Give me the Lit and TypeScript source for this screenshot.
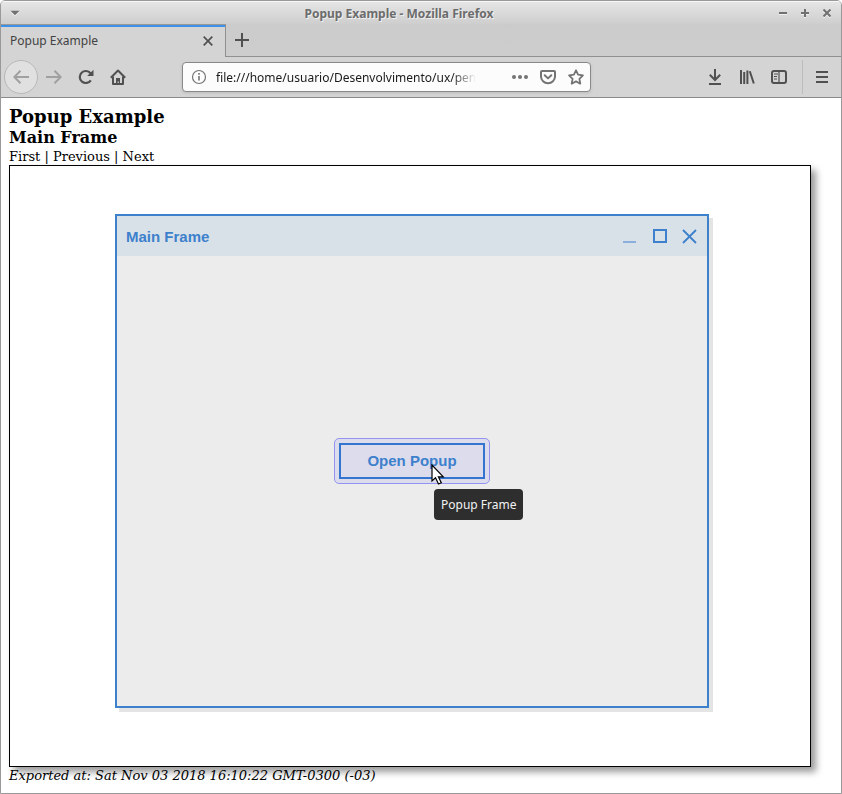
import { LitElement, html, css } from "lit";
import { customElement, property } from "lit/decorators.js";

@customElement("browser-chrome")
class BrowserChrome extends LitElement {
  @property() heading = "";
  @property() url = "";

  static styles = css`
    :host {
      display: block;
      font: 12px/16px "Noto Sans", sans-serif;
      color: #424242;
      background: #d4d4d4;
    }
    button {
      display: flex;
      align-items: center;
      justify-content: center;
      flex: none;
      padding: 0;
      border: 0;
      background: none;
      color: #505050;
    }
    svg {
      display: block;
      fill: none;
      stroke: currentColor;
      stroke-width: 2;
    }
    .titlebar {
      display: flex;
      height: 23px;
      background: linear-gradient(#e6e6e6, #cecece);
      box-shadow: inset 0 1px #f8f8f8;
    }
    .titlebar button {
      width: 22px;
      color: #707070;
      filter: drop-shadow(0 1px #f0f0f0);
    }
    .titlebar .menu {
      width: 28px;
    }
    .title {
      flex: 1;
      text-align: center;
      font-weight: 700;
      line-height: 26px;
      color: #6c6c6c;
      text-shadow: 1px 1px #f0f0f0;
    }
    .controls {
      display: flex;
      padding: 0 3px;
    }
    .tabs {
      display: flex;
      height: 33px;
      background: linear-gradient(#cbcbcb, #cdcdcd);
    }
    .tab {
      display: flex;
      align-items: center;
      justify-content: space-between;
      box-sizing: border-box;
      width: 225px;
      padding: 0 7px 0 9px;
      border-top: 1px solid #999;
      border-right: 1px solid #909090;
      background: #d4d4d4;
      box-shadow: inset 0 2px #3d92e8;
    }
    .tab button {
      width: 20px;
      height: 20px;
    }
    .rest {
      flex: 1;
      display: flex;
      border-bottom: 1px solid #909090;
    }
    .rest button {
      width: 32px;
    }
    .toolbar {
      display: flex;
      align-items: center;
      height: 40px;
      padding: 0 3px;
      border-bottom: 1px solid #8a8a8a;
    }
    .toolbar button {
      width: 32px;
      height: 32px;
    }
    .toolbar .back {
      box-sizing: border-box;
      width: 34px;
      height: 34px;
      border: 1px solid #b8b8b8;
      border-radius: 50%;
      background: #e0e0e0;
    }
    .toolbar button:disabled {
      color: #a0a0a0;
    }
    .field {
      flex: 1;
      min-width: 0;
      display: flex;
      align-items: center;
      box-sizing: border-box;
      height: 30px;
      margin: 0 108px 0 48px;
      padding: 0 0 0 8px;
      border: 1px solid #888;
      border-radius: 4px;
      background: #fcfcfc;
      box-shadow: 0 1px 3px #bbb;
      color: #737373;
    }
    .field input {
      flex: 1;
      min-width: 0;
      margin: 0 30px 0 9px;
      padding: 2px 0 0;
      border: 0;
      outline: 0;
      background: none;
      font: inherit;
      color: #1a1a1a;
      mask-image: linear-gradient(to left, transparent, #000 24px);
    }
    .field button {
      width: 28px;
      height: 28px;
      color: #737373;
    }
    .divider {
      width: 1px;
      height: 34px;
      margin: 0 3px 0 7px;
      background: #bcbcbc;
    }
  `;

  render() {
    return html`
      <div class="titlebar">
        <button class="menu" aria-label="Window menu">
          <svg width="10" height="6" viewBox="0 0 10 6"><path d="M0.500 0.700h9L5 5.300z" fill="currentColor" stroke="none" /></svg>
        </button>
        <div class="title">${this.heading} - Mozilla Firefox</div>
        <div class="controls">
          <button aria-label="Minimize"><svg width="8" height="8" viewBox="0 0 8 8"><path d="M0 4h8" /></svg></button>
          <button aria-label="Maximize"><svg width="8" height="8" viewBox="0 0 8 8"><path d="M0 4h8M4 0v8" /></svg></button>
          <button aria-label="Close"><svg width="8" height="8" viewBox="0 0 8 8"><path d="M0.500 0.500l7 7M7.500 0.500l-7 7" /></svg></button>
        </div>
      </div>
      <div class="tabs">
        <div class="tab">
          <span>${this.heading}</span>
          <button aria-label="Close tab">
            <svg width="10" height="10" viewBox="0 0 10 10"><path d="M0.700 0.700l8.600 8.600M9.300 0.700l-8.600 8.600" stroke-width="1.700" /></svg>
          </button>
        </div>
        <div class="rest">
          <button aria-label="New tab"><svg width="14" height="14" viewBox="0 0 14 14"><path d="M0 7h14M7 0v14" /></svg></button>
        </div>
      </div>
      <div class="toolbar">
        <button class="back" aria-label="Back" disabled>
          <svg width="16" height="16" viewBox="0 0 16 16"><path d="M1 8h15M7.500 1.800L1.300 8l6.200 6.200" /></svg>
        </button>
        <button aria-label="Forward" disabled>
          <svg width="16" height="16" viewBox="0 0 16 16"><path d="M0 8h15M8.500 1.800L14.700 8l-6.200 6.200" /></svg>
        </button>
        <button aria-label="Reload">
          <svg width="16" height="16" viewBox="0 0 16 16">
            <path d="M12.800 11.300A6 6 0 1 1 12.500 4.300" stroke-width="2.200" />
            <path d="M15.500 0.700V7H9.200z" fill="currentColor" stroke="none" />
          </svg>
        </button>
        <button aria-label="Home">
          <svg width="16" height="16" viewBox="0 0 16 16">
            <path d="M0.800 8.700L8 1.500l7.200 7.200" stroke-linejoin="round" />
            <path d="M3 7.500V15h10V7.500" stroke-linejoin="round" />
            <path d="M6 15V9h4v6H8.800v-2.500H7.600V15z" fill="currentColor" stroke="none" />
          </svg>
        </button>
        <div class="field">
          <svg width="16" height="16" viewBox="0 0 16 16">
            <circle cx="8" cy="8" r="6.500" stroke-width="1.200" />
            <path d="M8 7v4.500M8 4v1.800" stroke-width="1.600" />
          </svg>
          <input aria-label="Address" .value=${this.url} />
          <button aria-label="Page actions">
            <svg width="16" height="16" viewBox="0 0 16 16">
              <g fill="currentColor" stroke="none"><circle cx="2" cy="8" r="2" /><circle cx="8" cy="8" r="2" /><circle cx="14" cy="8" r="2" /></g>
            </svg>
          </button>
          <button aria-label="Save to Pocket">
            <svg width="16" height="16" viewBox="0 0 16 16">
              <path d="M2 2h12q1 0 1 1v4.500a7 6.700 0 0 1-14 0V3q0-1 1-1z" />
              <path d="M4.700 6.200L8 9.400l3.300-3.200" stroke-linecap="round" stroke-linejoin="round" />
            </svg>
          </button>
          <button aria-label="Bookmark">
            <svg width="16" height="16" viewBox="0 0 16 16">
              <path d="M8 1.300l2.100 4.400 4.800.7-3.500 3.400.9 4.900L8 12.400l-4.300 2.300.9-4.900L1.100 6.400l4.800-.7z" stroke-width="1.800" stroke-linejoin="round" />
            </svg>
          </button>
        </div>
        <button aria-label="Downloads">
          <svg width="16" height="16" viewBox="0 0 16 16"><path d="M8 0v11M2.800 5.800L8 11l5.200-5.200M2 15h12" /></svg>
        </button>
        <button aria-label="Library">
          <svg width="16" height="16" viewBox="0 0 16 16"><path d="M2 1v14M5.200 3v12M8.400 1.500V15M10.800 2.200l4 12.300" /></svg>
        </button>
        <button aria-label="Sidebars">
          <svg width="16" height="16" viewBox="0 0 16 16">
            <rect x="1" y="2" width="14" height="12" rx="2" />
            <path d="M8 2v12" stroke-width="1.200" />
            <path d="M3 5h4M3 7.500h3M3 10h3" stroke-width="1" />
          </svg>
        </button>
        <div class="divider"></div>
        <button aria-label="Menu">
          <svg width="12" height="12" viewBox="0 0 12 12"><path d="M0 1h12M0 6h12M0 11h12" /></svg>
        </button>
      </div>
    `;
  }
}

@customElement("frame-mockup")
class FrameMockup extends LitElement {
  @property() heading = "";

  static styles = css`
    :host {
      display: flex;
      flex-direction: column;
      min-height: 490px;
      border: 2px solid #3d80cc;
      background: #ececec;
      box-shadow: 4px 4px #e4e4e4;
      font: bold 15px/18px "Liberation Sans", sans-serif;
      color: #3d80cc;
    }
    .bar {
      display: flex;
      align-items: center;
      height: 40px;
      padding: 0 9px;
      background: #d9e1e8;
    }
    .name {
      flex: 1;
      padding-top: 2px;
    }
    .controls {
      display: flex;
      gap: 14px;
    }
    .controls button {
      padding: 0;
      border: 0;
      background: none;
      color: inherit;
    }
    svg {
      display: block;
      fill: none;
      stroke: currentColor;
      stroke-width: 2;
    }
    .body {
      flex: 1;
      display: flex;
      align-items: center;
      justify-content: center;
      padding-bottom: 40px;
    }
    .hotspot {
      position: relative;
      padding: 4px;
      border: 1px solid #9393f2;
      border-radius: 5px;
      background: #dddcec;
    }
    .open {
      display: block;
      width: 146px;
      height: 36px;
      padding: 0;
      border: 2px solid #3476cf;
      background: none;
      font: inherit;
      color: inherit;
    }
    .cursor {
      position: absolute;
      left: 96px;
      top: 25px;
    }
    .tip {
      position: absolute;
      left: 99px;
      top: 50px;
      padding: 7px;
      border-radius: 4px;
      background: #2e2e2e;
      font: 12px/17px "Noto Sans", sans-serif;
      white-space: nowrap;
      color: #f2f2f2;
    }
  `;

  render() {
    return html`
      <div class="bar">
        <span class="name">${this.heading}</span>
        <div class="controls">
          <button aria-label="Minimize"><svg width="16" height="16" viewBox="0 0 16 16"><path d="M1 14h13" stroke="#8aafdd" /></svg></button>
          <button aria-label="Maximize"><svg width="16" height="16" viewBox="0 0 16 16"><path d="M2 2h12v12H2z" /></svg></button>
          <button aria-label="Close"><svg width="16" height="16" viewBox="0 0 16 16"><path d="M1 2l13 13M14 2L1 15" stroke-width="1.800" /></svg></button>
        </div>
      </div>
      <div class="body">
        <div class="hotspot">
          <button class="open" aria-describedby="tip">Open Popup</button>
          <svg class="cursor" width="14" height="21" viewBox="0 0 14 21">
            <path d="M1 1v16l3.500-3.200 3 6.200 2.800-1.300-2.900-5.900h4.900z" fill="#fff" stroke="#000" stroke-width="1.200" />
          </svg>
          <div class="tip" id="tip" role="tooltip">Popup Frame</div>
        </div>
      </div>
    `;
  }
}

@customElement("app-root")
class AppRoot extends LitElement {
  static styles = css`
    :host {
      display: block;
      box-sizing: border-box;
      min-height: 100vh;
      overflow: hidden;
      border: 1px solid #999;
      border-radius: 5px 5px 0 0;
      background: #fff;
      font: 13px/17px "DejaVu Serif", serif;
      color: #000;
    }
    main {
      padding: 8px 30px 8px 8px;
    }
    h1,
    h2,
    p {
      margin: 0;
    }
    h1 {
      font-size: 18px;
      line-height: 22px;
    }
    h2 {
      font-size: 16px;
      line-height: 20px;
    }
    .canvas {
      position: relative;
      padding: 48px 101px 58px 105px;
      border: 1px solid #000;
      box-shadow: 5px 5px 7px rgba(0, 0, 0, 0.4);
    }
    .exported {
      font-style: italic;
    }
  `;

  render() {
    return html`
      <browser-chrome heading="Popup Example" url="file:///home/usuario/Desenvolvimento/ux/pencil/"></browser-chrome>
      <main>
        <h1>Popup Example</h1>
        <h2>Main Frame</h2>
        <p>First | Previous | Next</p>
        <div class="canvas"><frame-mockup heading="Main Frame"></frame-mockup></div>
        <p class="exported">Exported at: Sat Nov 03 2018 16:10:22 GMT-0300 (-03)</p>
      </main>
    `;
  }
}
